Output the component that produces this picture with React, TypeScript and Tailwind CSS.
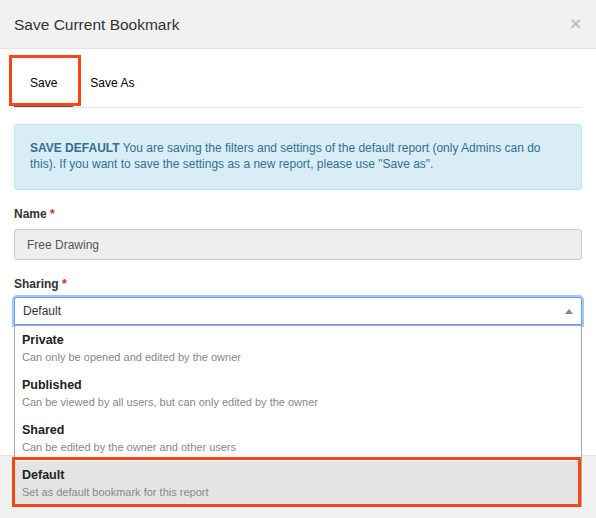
import React from 'react';

const options = [
  { title: 'Private', desc: 'Can only be opened and edited by the owner' },
  { title: 'Published', desc: 'Can be viewed by all users, but can only edited by the owner' },
  { title: 'Shared', desc: 'Can be edited by the owner and other users' },
  { title: 'Default', desc: 'Set as default bookmark for this report' },
];

export default function App() {
  return (
    <div className="w-[596px] h-[518px] bg-white flex flex-col overflow-hidden text-[#333] font-['Liberation_Sans',Arial,sans-serif]">
      {/* Header */}
      <div className="h-[49px] shrink-0 bg-[#f1f1f1] border-b border-[#e2e2e2] flex items-center justify-between pl-[14px] pr-[15px]">
        <h4 className="text-[15.5px] leading-[20px] text-[#333] pt-[1px]">Save Current Bookmark</h4>
        <button className="text-[19px] font-bold leading-none text-[#c2c2c2] pb-[2px]">×</button>
      </div>

      {/* Body */}
      <div className="flex-1 px-[14px] pt-[7px] flex flex-col">
        {/* Tabs */}
        <div className="flex border-b border-[#e3e3e3]">
          <div className="relative h-[51px] px-[16px] pt-[3px] flex items-center text-[12px] text-black border-b border-[#555] -mb-px">
            Save
            <div className="absolute -left-[5px] -right-[8px] -top-[1px] bottom-0 border-[3px] border-[#fb4418]" />
          </div>
          <div className="h-[51px] pl-[17px] pr-[15px] pt-[3px] flex items-center text-[12px] text-black">Save As</div>
        </div>

        {/* Info */}
        <div className="mt-[16px] bg-[#d9edf7] border border-[#bce8f1] rounded-[3px] text-[#31708f] text-[12px] leading-[16px] pl-[15px] pr-[20px] pt-[15px] pb-[17px]">
          <span className="font-bold">SAVE DEFAULT</span> You are saving the filters and settings of the default report (only Admins can do this). If you want to save the settings as a new report, please use "Save as".
        </div>

        {/* Name */}
        <label className="mt-[16px] text-[12px] leading-[16px] font-bold">
          Name <span className="text-[#e0201d]">*</span>
        </label>
        <div className="mt-[7px] h-[31px] bg-[#eee] border border-[#ccc] rounded-[3px] flex items-center px-[12px] text-[12px] text-[#555]">
          Free Drawing
        </div>

        {/* Sharing */}
        <label className="mt-[16px] text-[12px] leading-[16px] font-bold">
          Sharing <span className="text-[#e0201d]">*</span>
        </label>
        <div className="relative mt-[5px]">
          <div className="h-[28px] bg-white border border-[#6d9cf6] rounded-t-[3px] shadow-[0_0_0_2px_#a9c4fa] flex items-center justify-between pl-[8px] pr-[8px] text-[12px] text-[#333]">
            <span>Default</span>
            <span className="w-0 h-0 border-x-[4px] border-x-transparent border-b-[5px] border-b-[#888]" />
          </div>
          {/* Dropdown */}
          <div className="absolute z-10 top-full left-0 right-0 bg-white border-x border-b border-t border-[#aaa]">
            {options.map((o, i) => {
              const active = i === options.length - 1;
              return (
                <div
                  key={o.title}
                  className={`relative h-[45px] pl-[7px] pt-[6px] ${active ? 'bg-[#e4e4e4]' : ''}`}
                >
                  <div className="text-[12.5px] leading-[17px] font-bold text-[#222]">{o.title}</div>
                  <div className="text-[11px] leading-[16px] text-[#888]">{o.desc}</div>
                  {active && (
                    <div className="absolute -left-[3px] right-0 -top-[4px] -bottom-[1px] border-[3px] border-[#fb4418]" />
                  )}
                </div>
              );
            })}
          </div>
        </div>
      </div>

      {/* Footer */}
      <div className="h-[63px] shrink-0 bg-[#f1f1f1] border-t border-[#e5e5e5]" />
    </div>
  );
}
